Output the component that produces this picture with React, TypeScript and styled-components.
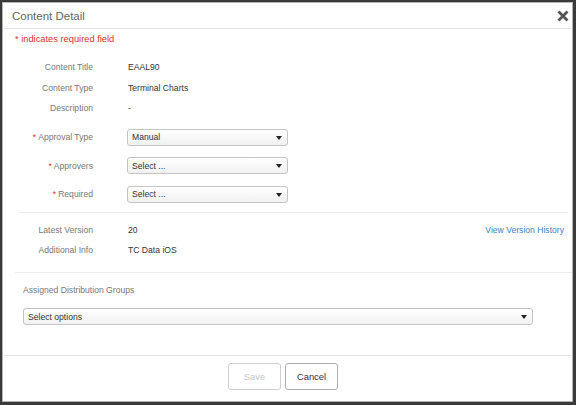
import { FC, ReactNode } from 'react';
import styled, { createGlobalStyle } from 'styled-components';

const GlobalStyle = createGlobalStyle`
  html, body {
    margin: 0;
    padding: 0;
    background: #3a3a3a;
    font-family: 'Liberation Sans', Arial, sans-serif;
  }
  #root {
    padding: 2px 0 0 2px;
  }
`;

const StyledModal = styled.div`
  box-sizing: border-box;
  width: 571px;
  height: 400px;
  border: 1px solid #b4b4b4;
  background: #fff;
  display: flex;
  flex-direction: column;
`;

const StyledHeader = styled.div`
  box-sizing: border-box;
  height: 26px;
  margin: 0 1px;
  padding: 3px 2px 0 8px;
  border-bottom: 1px solid #e3e3e3;
  display: flex;
  align-items: center;
  justify-content: space-between;
`;

const StyledTitle = styled.h4`
  margin: 0;
  font-size: 11.5px;
  font-weight: normal;
  color: #666;
  line-height: 1;
`;

const StyledClose = styled.button`
  border: 0;
  background: none;
  padding: 0;
  margin-top: -3px;
  display: flex;
  cursor: pointer;
`;

const StyledBody = styled.div`
  flex: 1;
  padding: 4px 4px 0 12px;
  display: flex;
  flex-direction: column;
`;

const StyledRequiredNote = styled.div`
  font-size: 9.3px;
  line-height: 12px;
  color: #e0312c;
`;

const StyledSection = styled.div<{ $top: number }>`
  margin: ${({ $top }) => $top}px 0 0 3px;
  display: flex;
  flex-direction: column;
`;

const StyledRow = styled.div<{ $height: number }>`
  display: grid;
  grid-template-columns: 75px 1fr auto;
  column-gap: 34px;
  align-items: center;
  height: ${({ $height }) => $height}px;
  font-size: 8.6px;
`;

const StyledLabel = styled.div`
  text-align: right;
  color: #777;
`;

const StyledStar = styled.span`
  color: #e0312c;
  margin-right: 2px;
`;

const StyledValue = styled.div`
  padding-left: 1px;
  color: #333;
`;

const StyledSelect = styled.div<{ $width: number }>`
  position: relative;
  box-sizing: border-box;
  width: ${({ $width }) => $width}px;
  height: 17px;
  padding: 0 4px;
  border: 1px solid #c4c4c4;
  border-radius: 3px;
  background: linear-gradient(#ffffff, #f1f1f1);
  display: flex;
  align-items: center;
  font-size: 8.6px;
  color: #333;

  &:after {
    content: '';
    position: absolute;
    right: 5px;
    top: 6px;
    border-left: 3px solid transparent;
    border-right: 3px solid transparent;
    border-top: 4px solid #222;
  }
`;

const StyledLink = styled.a`
  color: #3a82c4;
  text-decoration: none;
  padding-right: 4px;
`;

const StyledDivider = styled.div<{ $top: number; $bleed?: boolean }>`
  height: 1px;
  background: #ececec;
  margin: ${({ $top }) => $top}px ${({ $bleed }) => ($bleed ? '-4px' : '0')} 0
    ${({ $bleed }) => ($bleed ? '0' : '3px')};
`;

const StyledGroupsLabel = styled.div`
  margin: 10.5px 0 0 8px;
  font-size: 8.6px;
  line-height: 12px;
  color: #777;
`;

const StyledGroupsSelect = styled.div`
  margin: 12.5px 0 0 8px;
`;

const StyledFooter = styled.div`
  box-sizing: border-box;
  height: 46px;
  margin: 0 1px;
  padding: 7px 9px 0 0;
  border-top: 1px solid #e3e3e3;
  display: flex;
  justify-content: center;
  align-items: flex-start;
  gap: 4px;
`;

const StyledButton = styled.button`
  box-sizing: border-box;
  width: 53px;
  height: 27px;
  border: 1px solid #adadad;
  border-radius: 3px;
  background: #fff;
  font-family: inherit;
  font-size: 9.4px;
  color: #333;
  cursor: pointer;

  &:disabled {
    border-color: #cfcfcf;
    color: #c8c8c8;
    cursor: default;
  }
`;

const CloseIcon: FC = () => (
  <svg width="12" height="12" viewBox="0 0 12 12">
    <path d="M1.5 1.5 L10.5 10.5 M10.5 1.5 L1.5 10.5" stroke="#555" strokeWidth="2.8" />
  </svg>
);

interface IRowProps {
  label: string;
  required?: boolean;
  height: number;
  children: ReactNode;
  extra?: ReactNode;
}

const Row: FC<IRowProps> = ({ label, required, height, children, extra }) => (
  <StyledRow $height={height}>
    <StyledLabel>
      {required && <StyledStar>*</StyledStar>}
      {label}
    </StyledLabel>
    {children}
    {extra ?? <span />}
  </StyledRow>
);

const infoRows: string[][] = [
  ['Content Title', 'EAAL90'],
  ['Content Type', 'Terminal Charts'],
  ['Description', '-'],
];

const selectRows: string[][] = [
  ['Approval Type', 'Manual'],
  ['Approvers', 'Select ...'],
  ['Required', 'Select ...'],
];

const App: FC = () => (
  <>
    <GlobalStyle />
    <StyledModal>
      <StyledHeader>
        <StyledTitle>Content Detail</StyledTitle>
        <StyledClose aria-label="Close">
          <CloseIcon />
        </StyledClose>
      </StyledHeader>
      <StyledBody>
        <StyledRequiredNote>* indicates required field</StyledRequiredNote>
        <StyledSection $top={11.75}>
          {infoRows.map(([label, value]) => (
            <Row key={label} label={label} height={20.5}>
              <StyledValue>{value}</StyledValue>
            </Row>
          ))}
        </StyledSection>
        <StyledSection $top={4.5}>
          {selectRows.map(([label, value]) => (
            <Row key={label} label={label} required height={28.5}>
              <StyledSelect $width={161}>{value}</StyledSelect>
            </Row>
          ))}
        </StyledSection>
        <StyledDivider $top={3.75} />
        <StyledSection $top={7}>
          <Row
            label="Latest Version"
            height={20}
            extra={<StyledLink href="#">View Version History</StyledLink>}
          >
            <StyledValue>20</StyledValue>
          </Row>
          <Row label="Additional Info" height={20}>
            <StyledValue>TC Data iOS</StyledValue>
          </Row>
        </StyledSection>
        <StyledDivider $top={12} $bleed />
        <StyledGroupsLabel>Assigned Distribution Groups</StyledGroupsLabel>
        <StyledGroupsSelect>
          <StyledSelect $width={510}>Select options</StyledSelect>
        </StyledGroupsSelect>
      </StyledBody>
      <StyledFooter>
        <StyledButton disabled>Save</StyledButton>
        <StyledButton>Cancel</StyledButton>
      </StyledFooter>
    </StyledModal>
  </>
);

export default App;
